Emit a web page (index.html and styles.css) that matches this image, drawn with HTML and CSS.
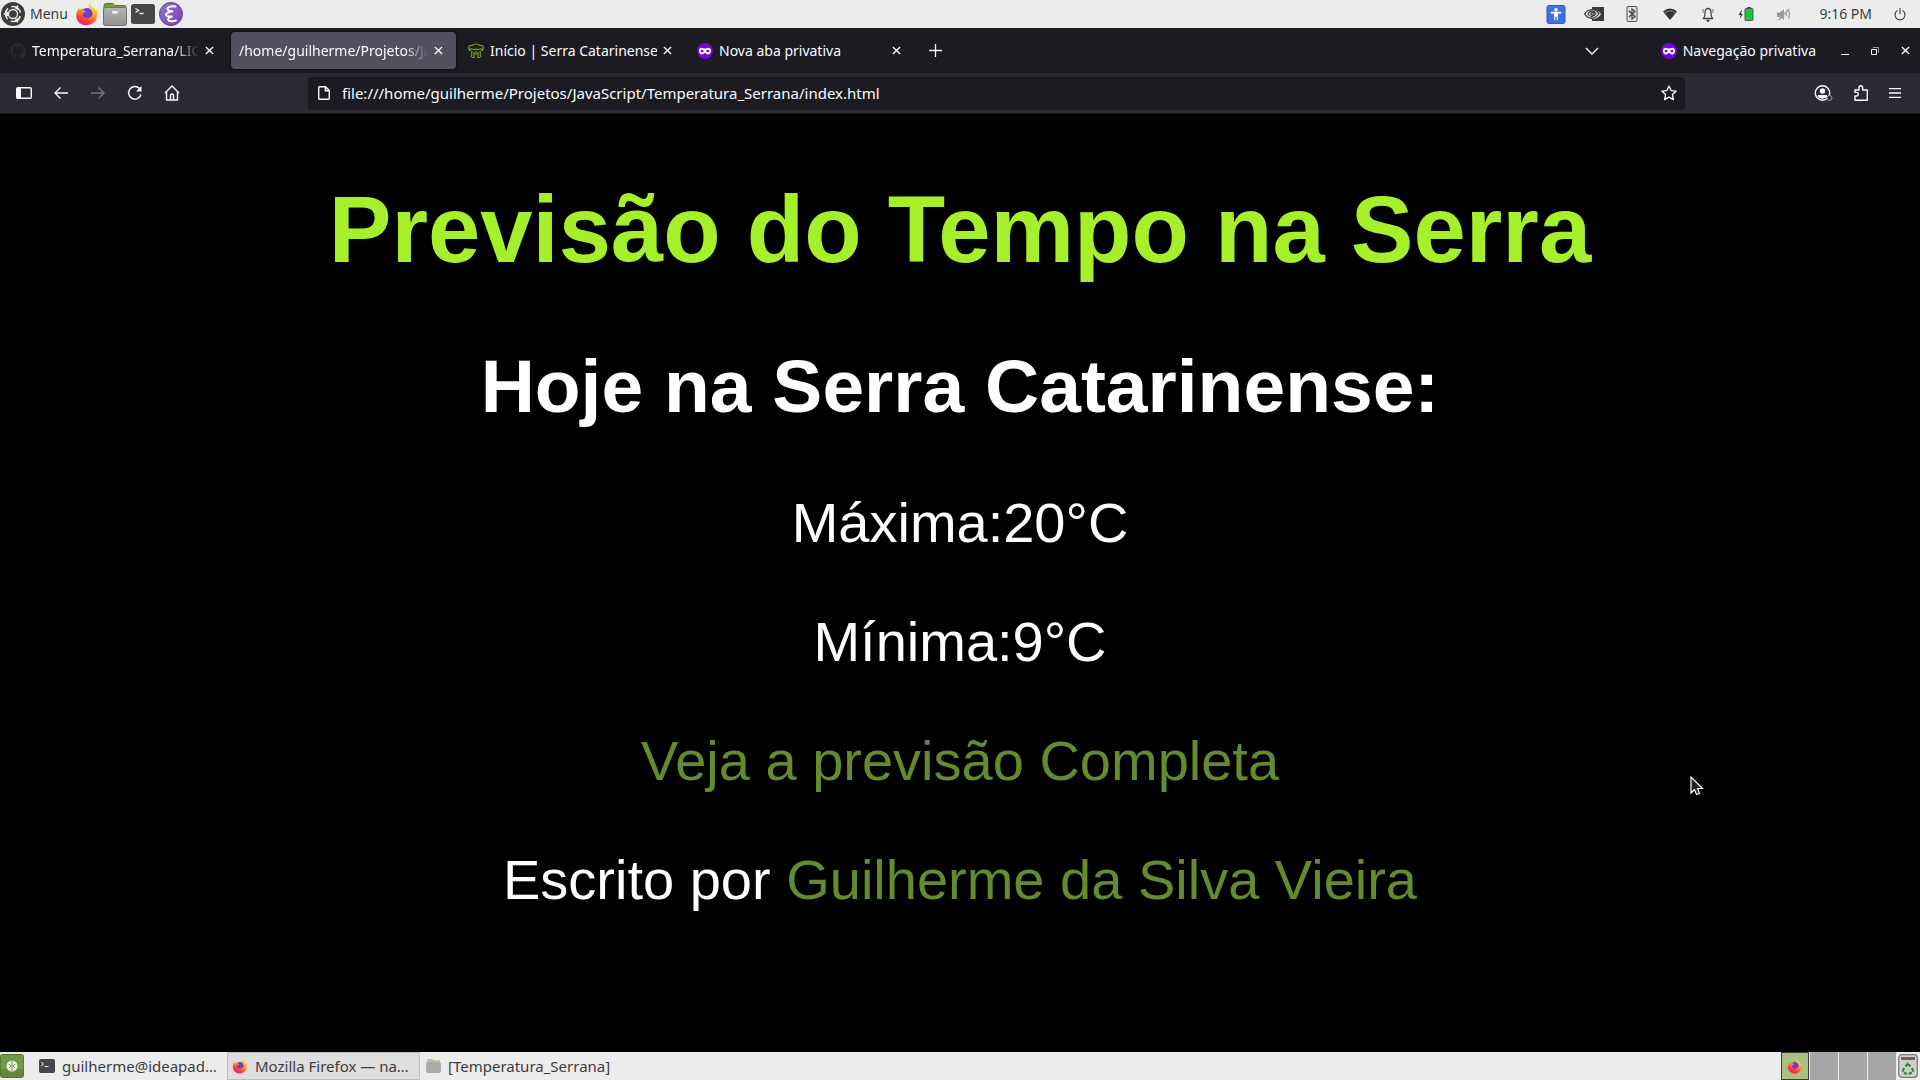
FILE: index.html
```html
<!DOCTYPE html>
<html lang="pt-BR">
<head>
<meta charset="utf-8">
<title>Temperatura Serrana</title>
<link rel="stylesheet" href="styles.css">
</head>
<body>
<svg class="defs" aria-hidden="true">
  <defs>
    <linearGradient id="fox" x1="0.8" y1="0" x2="0.3" y2="1"><stop offset="0" stop-color="#fff24a"/><stop offset="0.45" stop-color="#ff9a1f"/><stop offset="0.75" stop-color="#ff4038"/><stop offset="1" stop-color="#e8197e"/></linearGradient>
    <linearGradient id="emacs" x1="0" y1="0" x2="1" y2="1"><stop offset="0" stop-color="#8080c8"/><stop offset="1" stop-color="#8a35b5"/></linearGradient>
    <linearGradient id="folder" x1="0" y1="0" x2="0" y2="1"><stop offset="0" stop-color="#b4b4b4"/><stop offset="1" stop-color="#919191"/></linearGradient>
  </defs>
  <symbol id="firefox" viewBox="0 0 24 24">
    <circle cx="12" cy="13" r="7" fill="#6a3fd8"/>
    <path fill="url(#fox)" fill-rule="evenodd" d="M14.5 1c1 3 4.500 4 6 7.500l1.200-.8c1.300 5 .6 9-2.200 12.100C14 25 5.500 24 2.500 18.500.5 15 1 10 4 6l.8 2.200C5.700 7.200 7 6.600 8 7c-.5.800.3 1.700 3 1.900-.6 1.400-2.300 1.600-3.300 2.500-.5 4 3.800 6 7 4.100 3.300-2 3.300-5 1.300-7.500-2-2-3-4-1.500-7z"/>
  </symbol>
  <symbol id="folder-icon" viewBox="0 0 24 24">
    <path fill="#7d9c45" stroke="#5c7233" d="M1 20V3.500Q1 1.500 3 1.500h7l2 2h9.500q1.500 0 1.500 1.500v15z"/>
    <rect x=".5" y="5.500" width="23" height="18" rx="2" fill="url(#folder)" stroke="#6f6f64"/>
    <rect x="9" y="9" width="6" height="2.500" rx="1" fill="#f4f4f4"/>
  </symbol>
  <symbol id="terminal" viewBox="0 0 24 20">
    <rect width="24" height="20" rx="2.500" fill="#474747"/>
    <path d="M4.500 4.500l3 2-3 2M8.500 9.500h4" fill="none" stroke="#eee" stroke-width="1.300"/>
  </symbol>
  <symbol id="mask" viewBox="0 0 16 16">
    <circle cx="8" cy="8" r="8" fill="#7a00d8"/>
    <path fill="#fff" fill-rule="evenodd" d="M4.800 4.800c1.500 0 2 .8 3.200.8s1.700-.8 3.200-.8C13 4.800 14 6 14 8s-1.200 3.400-3 3.400c-1.400 0-1.900-1.400-3-1.400s-1.600 1.400-3 1.400C3.200 11.400 2 10 2 8s1-3.200 2.800-3.200zM3.400 8c.9 1.700 2.500 1.700 3.400 0-.9-1.700-2.500-1.700-3.400 0zm5.800 0c.9 1.700 2.500 1.700 3.400 0-.9-1.700-2.500-1.700-3.400 0z"/>
  </symbol>
  <symbol id="close" viewBox="0 0 10 10"><path d="M1 1l8 8M9 1l-8 8" fill="none" stroke="currentColor" stroke-width="1.500"/></symbol>
</svg>

<header class="panel panel-top">
  <button class="menu" type="button">
    <svg width="24" height="24" viewBox="0 0 24 24"><circle cx="12" cy="12" r="12" fill="#3d3d3d"/><circle cx="12" cy="12" r="7.500" fill="none" stroke="#eee" stroke-width="1.500" stroke-dasharray="12 3.700" stroke-dashoffset="-2"/><circle cx="12" cy="12" r="4.500" fill="none" stroke="#eee" stroke-width="1.300"/><path d="M2 12l5-2.500v5zM17 3l.5 5.500-4-2.500zM17 21l.5-5.500-4 2.500z" fill="#eee"/></svg>
    <span>Menu</span>
  </button>
  <nav class="launchers" aria-label="Aplicativos">
    <button type="button" aria-label="Firefox"><svg width="24" height="24"><use href="#firefox"/></svg></button>
    <button type="button" aria-label="Arquivos"><svg width="24" height="24"><use href="#folder-icon"/></svg></button>
    <button type="button" aria-label="Terminal"><svg width="24" height="20"><use href="#terminal"/></svg></button>
    <button type="button" aria-label="Emacs"><svg width="24" height="24" viewBox="0 0 24 24"><circle cx="12" cy="12" r="11.500" fill="url(#emacs)" stroke="#5a4a9a"/><path d="M16.500 4.500c-5-.8-8.500 1-8 2.800.4 1.500 3.500 2 5.500 2-4 .6-7.500 1.800-7.200 3.600.3 1.600 3.500 1.700 6.700 1.600-2.500.6-5 1.700-4.500 3.200.6 1.700 5 2 8 .8" fill="none" stroke="#fff" stroke-width="1.900" stroke-linecap="round"/></svg></button>
  </nav>
  <div class="tray">
    <svg height="19" viewBox="0 0 20 20"><rect x=".5" y=".5" width="19" height="19" rx="2" fill="#3f6fe0" stroke="#3158b0"/><circle cx="10" cy="5" r="1.800" fill="#fff"/><path d="M4.500 7.200h11v1.800h-3.500v7h-1.300v-4h-1.400v4H8V9H4.500z" fill="#fff"/></svg>
    <svg height="14" viewBox="0 0 20 14"><path d="M8 0h12v14H8v-2c5 0 8-3 9-5-2-3-5-4.500-9-4.500z" fill="#3c3c3c"/><path d="M.7 7C4 1.500 11 1 15 6.500 11 13 4 12.500.7 7zM4 7c2-4 6-3.500 8-.5C9.500 10.500 6 10.500 4 7zM7 7c0-2 3-2 3 0-1 1.500-3 1.500-3 0z" fill="none" stroke="#3c3c3c" stroke-width="1.300"/></svg>
    <svg height="16" viewBox="0 0 11 16"><rect x=".5" y=".5" width="10" height="15" rx="1" fill="#ddd" stroke="#555"/><path d="M2.500 5l6 5.500-3 2.500V3l3 2.500-6 5.500" fill="none" stroke="#444" stroke-width="1.200"/></svg>
    <svg height="12" viewBox="0 0 14 12"><path d="M0 3.500Q7-2.500 14 3.500L7 12z" fill="#333"/><path d="M1.500 5Q7 .8 12.500 5" fill="none" stroke="#aaa" stroke-width=".7"/></svg>
    <svg height="15" viewBox="0 0 12 15"><path d="M1 11.500c2-1 2-3 2-6C3 2.500 4.500 1.500 6 1.500s3 1 3 4c0 3 0 5 2 6z" fill="none" stroke="#444" stroke-width="1.300"/><path d="M4.500 13h3l-1.500 2zM1 2v4M11 2v4" fill="#444" stroke="#444" stroke-width=".7"/></svg>
    <svg height="14" viewBox="0 0 15 14"><path d="M3.500 2.500L0 8h2.200L1 12l3.500-5H2.600z" fill="#333"/><rect x="6.500" y="1.500" width="8" height="12" rx="1" fill="#18c932" stroke="#555"/><path d="M8.500 0h4v1.500h-4z" fill="#555"/></svg>
    <svg height="13" viewBox="0 0 14 13"><path d="M0 4.500h3l4-3.500v11L3 9H0z" fill="#999"/><path d="M12 1L1.500 12M9 4.500q1.500 2 0 4M11 2.500q3.500 4 0 8" fill="none" stroke="#999" stroke-width="1.200"/></svg>
    <time>9:16 PM</time>
    <button type="button" aria-label="Desligar"><svg width="12" height="13" viewBox="0 0 12 13"><path d="M3.500 2.500a5 5 0 1 0 5 0M6 0v6" fill="none" stroke="#444" stroke-width="1.200"/></svg></button>
  </div>
</header>

<div class="tabbar">
  <div class="tabs" role="tablist">
    <div class="tab" role="tab">
      <svg width="16" height="16" viewBox="0 0 16 16"><path fill="#252b31" d="M8 0a8 8 0 0 0-2.500 15.600c.4 0 .5-.2.500-.4v-1.500c-2.200.5-2.700-1-2.700-1-.4-.9-.9-1.200-.9-1.200-.7-.5.1-.5.1-.5.800.1 1.200.8 1.200.8.7 1.200 1.900.9 2.300.7.100-.5.300-.9.500-1.100-1.800-.2-3.600-.9-3.600-4 0-.9.300-1.600.8-2.100-.1-.2-.4-1 .1-2.100 0 0 .7-.2 2.200.8a7.500 7.500 0 0 1 4 0c1.500-1 2.200-.8 2.200-.8.400 1.100.2 1.900.1 2.100.5.600.8 1.300.8 2.100 0 3.100-1.900 3.800-3.700 4 .3.300.6.800.6 1.500v2.300c0 .2.100.5.500.4A8 8 0 0 0 8 0z"/></svg>
      <span class="tab-title tab-title-faded">Temperatura_Serrana/LIC</span>
      <button type="button" aria-label="Fechar aba"><svg width="9" height="9"><use href="#close"/></svg></button>
    </div>
    <div class="tab tab-active" role="tab" aria-selected="true">
      <span class="tab-title tab-title-faded">/home/guilherme/Projetos/Ja</span>
      <button type="button" aria-label="Fechar aba"><svg width="9" height="9"><use href="#close"/></svg></button>
    </div>
    <div class="tab" role="tab">
      <svg width="16" height="16" viewBox="0 0 16 16"><path d="M2.500 8C-1 5 1 2 4 2.500c2-2 6-2 8 0C15 2 17 5 13.500 8M1.500 7c2-3 4 1 6.500-1 2.500 2 4.500-2 6.500 1M3 14c1-2 .5-3 1-6M13 14c-1-2-.5-3-1-6M6 15V9M8 12V8M10 15V9M4 14.500h2M10 14.500h2" fill="none" stroke="#72a51d" stroke-width="1.200"/></svg>
      <span class="tab-title">Início | Serra Catarinense</span>
      <button type="button" aria-label="Fechar aba"><svg width="9" height="9"><use href="#close"/></svg></button>
    </div>
    <div class="tab" role="tab">
      <svg width="16" height="16"><use href="#mask"/></svg>
      <span class="tab-title">Nova aba privativa</span>
      <button type="button" aria-label="Fechar aba"><svg width="9" height="9"><use href="#close"/></svg></button>
    </div>
  </div>
  <button class="new-tab" type="button" aria-label="Nova aba"><svg width="13" height="13" viewBox="0 0 13 13"><path d="M6.500 0v13M0 6.500h13" stroke="currentColor" stroke-width="1.300"/></svg></button>
  <div class="window-tools">
    <button class="all-tabs" type="button" aria-label="Listar abas"><svg width="14" height="8" viewBox="0 0 14 8"><path d="M1 1l6 6 6-6" fill="none" stroke="currentColor" stroke-width="1.400"/></svg></button>
    <div class="private"><svg width="16" height="16"><use href="#mask"/></svg><span>Navegação privativa</span></div>
    <div class="window-buttons">
      <button type="button" aria-label="Minimizar"><svg width="8" height="8" viewBox="0 0 8 8"><path d="M0 7.500h8" stroke="currentColor"/></svg></button>
      <button type="button" aria-label="Restaurar"><svg width="8" height="8" viewBox="0 0 8 8"><path d="M.5 2.500h5v5h-5z" fill="none" stroke="currentColor"/><path d="M2 .5h5.500V6" fill="none" stroke="#999"/></svg></button>
      <button type="button" aria-label="Fechar"><svg width="9" height="9"><use href="#close"/></svg></button>
    </div>
  </div>
</div>

<div class="toolbar">
  <div class="nav-buttons">
    <button type="button" aria-label="Barra lateral"><svg width="16" height="12" viewBox="0 0 16 12"><rect x=".7" y=".7" width="14.600" height="10.600" rx="1" fill="none" stroke="currentColor" stroke-width="1.400"/><path d="M1 1h4v10H1z" fill="currentColor"/></svg></button>
    <button type="button" aria-label="Voltar"><svg width="14" height="12" viewBox="0 0 14 12"><path d="M14 6H1M6.500.5L1 6l5.500 5.500" fill="none" stroke="currentColor" stroke-width="1.400"/></svg></button>
    <button type="button" aria-label="Avançar" disabled><svg width="14" height="12" viewBox="0 0 14 12"><path d="M0 6h13M7.500.5L13 6l-5.500 5.500" fill="none" stroke="currentColor" stroke-width="1.400"/></svg></button>
    <button type="button" aria-label="Recarregar"><svg width="16" height="16" viewBox="0 0 16 16"><path d="M14 9.500A6.300 6.300 0 1 1 12.500 3.500" fill="none" stroke="currentColor" stroke-width="1.500"/><path d="M14.500 1v5.500H9z" fill="currentColor"/></svg></button>
    <button type="button" aria-label="Página inicial"><svg width="16" height="16" viewBox="0 0 16 16"><path d="M1 8l7-7 7 7M2.500 7v8h11V7M6.500 15v-4.500a1.500 1.500 0 0 1 3 0V15" fill="none" stroke="currentColor" stroke-width="1.400" stroke-linejoin="round"/></svg></button>
  </div>
  <div class="urlbar">
    <svg width="12" height="14" viewBox="0 0 12 14"><path d="M.7 1.700q0-1 1-1h5.800l3.800 3.800v7.800q0 1-1 1H1.700q-1 0-1-1zM7.300.7v4h4" fill="none" stroke="currentColor" stroke-width="1.400"/></svg>
    <input type="text" aria-label="Endereço" value="file:///home/guilherme/Projetos/JavaScript/Temperatura_Serrana/index.html">
    <button type="button" aria-label="Favoritar"><svg width="16" height="16" viewBox="0 0 16 16"><path d="M8 1l2.100 4.600 5 .6-3.700 3.400 1 5L8 12.100l-4.400 2.500 1-5L.9 6.200l5-.6z" fill="none" stroke="currentColor" stroke-width="1.300" stroke-linejoin="round"/></svg></button>
  </div>
  <div class="extras">
    <button type="button" aria-label="Conta"><svg width="20" height="16" viewBox="0 0 20 16"><circle cx="8.500" cy="8" r="7.200" fill="none" stroke="currentColor" stroke-width="1.400"/><circle cx="8.500" cy="6" r="2.700" fill="currentColor"/><path d="M4 10h9v2c-2.500 2.300-6.500 2.300-9 0z" fill="currentColor"/><circle cx="15.500" cy="13" r="2.500" fill="#2b2a33" stroke="#999"/></svg></button>
    <button type="button" aria-label="Extensões"><svg width="14" height="16" viewBox="0 0 14 16"><path d="M1 15.300V11h1.500a1.800 1.800 0 0 0 0-3.600H1V5h4V2.500a1.800 1.800 0 0 1 3.600 0V5h4.700v10.300z" fill="none" stroke="currentColor" stroke-width="1.400" stroke-linejoin="round"/></svg></button>
    <button type="button" aria-label="Menu do Firefox"><svg width="14" height="10" viewBox="0 0 14 10"><path d="M1 .7h12M1 5h12M1 9.300h12" stroke="currentColor" stroke-width="1.300"/></svg></button>
  </div>
</div>

<main class="page">
  <h1>Previsão do Tempo na Serra</h1>
  <h2>Hoje na Serra Catarinense:</h2>
  <p>Máxima:20°C</p>
  <p>Mínima:9°C</p>
  <p><a href="#previsao">Veja a previsão Completa</a></p>
  <p>Escrito por <a href="#autor">Guilherme da Silva Vieira</a></p>
  <svg class="cursor" width="14" height="20" viewBox="0 0 14 20"><path d="M1 1v16l3.500-3.500L6.500 18.500l3-1L7.500 12.500H12.500z" fill="#222" stroke="#fff" stroke-width="1.200"/></svg>
</main>

<footer class="panel panel-bottom">
  <button class="show-desktop" type="button" aria-label="Mostrar área de trabalho"><svg width="24" height="24" viewBox="0 0 24 24"><rect x=".5" y=".5" width="23" height="23" rx="2" fill="#719a45" stroke="#587a36"/><path d="M1 15h22v8H1z" fill="#628a3b"/><circle cx="12" cy="12" r="5.500" fill="#e8efdf"/><path d="M12 7v10M9 10l2 2-2 2M15 10l-2 2 2 2" fill="none" stroke="#719a45"/></svg></button>
  <div class="tasks">
    <button class="task" type="button"><svg width="16" height="16" viewBox="0 0 16 16"><rect x="0" y="1" width="16" height="14" rx="2" fill="#474747"/><path d="M2 4l2.500 2L2 8M5.500 8.500h4" fill="none" stroke="#eee"/></svg><span>guilherme@ideapad…</span></button>
    <button class="task task-active" type="button"><svg width="16" height="16"><use href="#firefox"/></svg><span>Mozilla Firefox — na…</span></button>
    <button class="task" type="button"><svg width="16" height="16" viewBox="0 0 16 16"><path d="M2 1h6l1 1h6v4H2z" fill="#b5cc93"/><rect x="1" y="4" width="15" height="11" rx="2" fill="#aaa"/></svg><span>[Temperatura_Serrana]</span></button>
  </div>
  <div class="workspaces">
    <button class="workspace workspace-active" type="button" aria-label="Espaço 1"><svg width="16" height="16"><use href="#firefox"/></svg></button>
    <button class="workspace" type="button" aria-label="Espaço 2"></button>
    <button class="workspace" type="button" aria-label="Espaço 3"></button>
    <button class="workspace" type="button" aria-label="Espaço 4"></button>
  </div>
  <button class="trash" type="button" aria-label="Lixeira"><svg width="20" height="24" viewBox="0 0 20 24"><rect x=".7" y=".7" width="18.600" height="22.600" rx="3" fill="#cfcfcf" stroke="#777" stroke-width="1.200"/><rect x="3" y="3" width="14" height="3" fill="#666"/><path d="M7.500 12.500l2.500-3 2.500 3M14 14l1 3-2.500 2.500h-2M6 14l-1 3 2 2.500h2" fill="none" stroke="#1e8b22" stroke-width="2" stroke-dasharray="4 1"/></svg></button>
</footer>
</body>
</html>
```
FILE: styles.css
```css
* { box-sizing: border-box; }

body {
  margin: 0;
  min-height: 100vh;
  display: flex;
  flex-direction: column;
  background: #000;
  color: #fbfbfe;
  font-family: "Noto Sans", sans-serif;
  font-size: 14px;
  line-height: 20px;
}

button {
  display: flex;
  align-items: center;
  justify-content: center;
  margin: 0;
  padding: 0;
  border: 0;
  background: none;
  color: inherit;
  font: inherit;
}

svg { display: block; flex: none; }
.defs { position: absolute; width: 0; height: 0; }

.panel {
  display: flex;
  align-items: center;
  height: 28px;
  background: #ececec;
  color: #3c3c3c;
}

.panel-top { padding: 0 14px 0 1px; }
.menu { gap: 5px; }
.launchers { display: flex; gap: 4px; margin-left: 7px; }
.launchers button { width: 24px; height: 24px; }
.tray {
  display: flex;
  align-items: center;
  margin-left: auto;
}
.tray > svg { width: 38px; }
.tray time { margin: 0 22px 0 16px; }

.tabbar {
  display: flex;
  align-items: center;
  height: 45px;
  padding: 0 10px 0 2px;
  background: #1c1b22;
}
.tabs { display: flex; gap: 4px; }
.tab {
  display: flex;
  align-items: center;
  gap: 6px;
  width: 225px;
  height: 37px;
  padding: 0 8px;
  border-radius: 4px;
}
.tab-active { background: #52505d; box-shadow: 0 0 3px #000; }
.tab-title {
  flex: 1;
  min-width: 0;
  overflow: hidden;
  white-space: nowrap;
}
.tab-title-faded { mask-image: linear-gradient(to left, transparent, #000 24px); }
.tab button { width: 20px; height: 20px; margin-left: -6px; }
.new-tab { width: 36px; height: 36px; margin-left: 3px; }
.window-tools { display: flex; align-items: center; margin-left: auto; }
.all-tabs { margin-right: 62px; }
.private { display: flex; align-items: center; gap: 6px; }
.window-buttons { display: flex; gap: 22px; margin-left: 25px; }

.toolbar {
  display: grid;
  grid-template-columns: 292px 1fr 217px;
  align-items: center;
  height: 41px;
  padding: 0 18px 0 16px;
  background: #2b2a33;
  border-bottom: 1px solid #15141a;
}
.nav-buttons { display: flex; gap: 21px; }
.nav-buttons button { width: 16px; height: 16px; }
.nav-buttons button:disabled { color: #77767c; }
.urlbar {
  display: flex;
  align-items: center;
  gap: 12px;
  height: 33px;
  padding: 0 8px 0 10px;
  border-radius: 4px;
  background: #1c1b22;
}
.urlbar input {
  flex: 1;
  min-width: 0;
  padding: 0;
  border: 0;
  outline: 0;
  background: none;
  color: inherit;
  font: inherit;
  font-size: 15px;
}
.extras { display: flex; align-items: center; justify-content: flex-end; gap: 20px; }

.page {
  position: relative;
  flex: 1;
  padding: 62px 8px 0;
  font-family: "Liberation Sans", Arial, sans-serif;
  font-size: 56px;
  line-height: 64px;
  text-align: center;
  color: #fff;
}
.page h1 { margin: 0 0 59px; font-size: 94px; line-height: 108px; color: #a6f02b; }
.page h2 { margin: 0 0 62px; font-size: 75px; line-height: 86px; }
.page p { margin: 0 0 55px; }
.page a { color: #658b2e; text-decoration: none; }
.cursor { position: absolute; left: 88%; top: 662px; }

.panel-bottom { align-items: stretch; font-size: 15px; }
.show-desktop { width: 24px; }
.tasks { display: flex; flex: 1; margin-left: 10px; }
.task {
  justify-content: flex-start;
  gap: 7px;
  width: 193px;
  padding: 0 4px;
  border: 1px solid transparent;
  white-space: nowrap;
}
.task-active { border-color: #bdbdbd; background: #dedede; }
.workspaces { display: flex; gap: 1px; }
.workspace { width: 28px; background: #a6a6a6; }
.workspace-active { border: 1px solid #3c3c3c; background: #a9c183; }
.trash { width: 24px; }
```
